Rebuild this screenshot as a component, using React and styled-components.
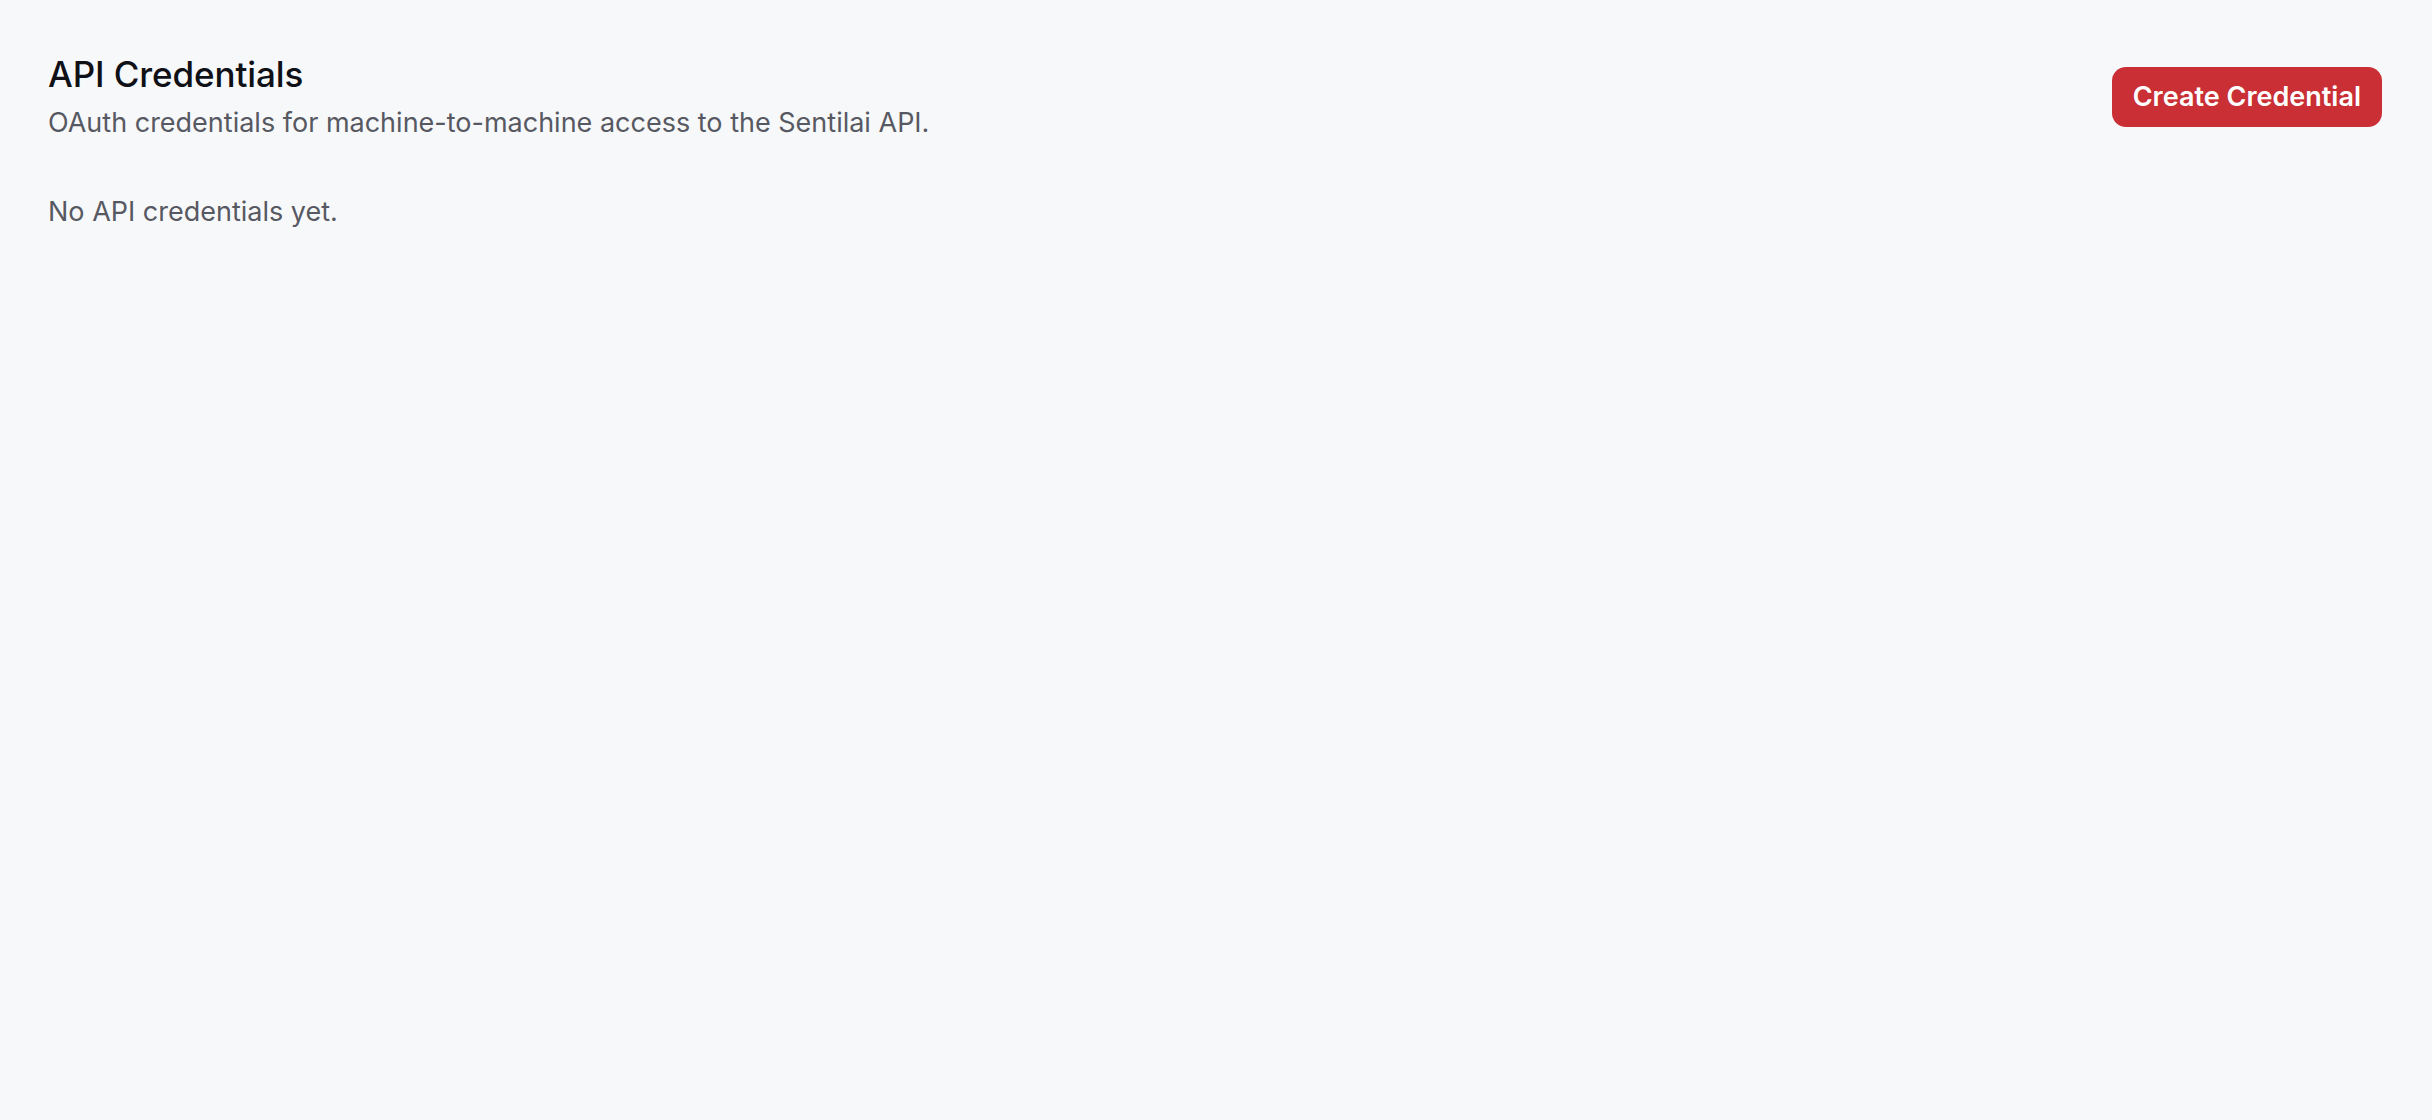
import React from "react";
import styled, { createGlobalStyle } from "styled-components";

const GlobalStyle = createGlobalStyle`
  html, body {
    margin: 0;
    padding: 0;
    background: #f7f8fa;
    font-family: Inter, "Noto Sans", sans-serif;
  }
  * {
    box-sizing: border-box;
  }
`;

const Page = styled.div`
  min-height: 100vh;
  padding: 52px 50px 48px 48px;
  background: #f7f8fa;
`;

const Header = styled.div`
  display: flex;
  align-items: center;
  justify-content: space-between;
  gap: 24px;
`;

const TitleBlock = styled.div`
  display: flex;
  flex-direction: column;
  gap: 9px;
`;

const Title = styled.h1`
  margin: 0;
  font-size: 35px;
  line-height: 44px;
  font-weight: 500;
  color: #0f1117;
  letter-spacing: -0.1px;
`;

const Subtitle = styled.p`
  margin: 0;
  font-size: 27px;
  line-height: 36px;
  color: #575962;
`;

const PrimaryButton = styled.button`
  height: 60px;
  padding: 0 21px;
  border: none;
  border-radius: 14px;
  background: #c92f35;
  color: #ffffff;
  font-family: inherit;
  font-size: 27px;
  font-weight: 600;
  cursor: pointer;
`;

const EmptyText = styled.p`
  margin: 53px 0 0;
  font-size: 27px;
  line-height: 36px;
  color: #575962;
`;

const App = () => {
  return (
    <>
      <GlobalStyle />
      <Page>
        <Header>
          <TitleBlock>
            <Title>API Credentials</Title>
            <Subtitle>
              OAuth credentials for machine-to-machine access to the Sentilai API.
            </Subtitle>
          </TitleBlock>
          <PrimaryButton>Create Credential</PrimaryButton>
        </Header>
        <EmptyText>No API credentials yet.</EmptyText>
      </Page>
    </>
  );
};

export default App;
